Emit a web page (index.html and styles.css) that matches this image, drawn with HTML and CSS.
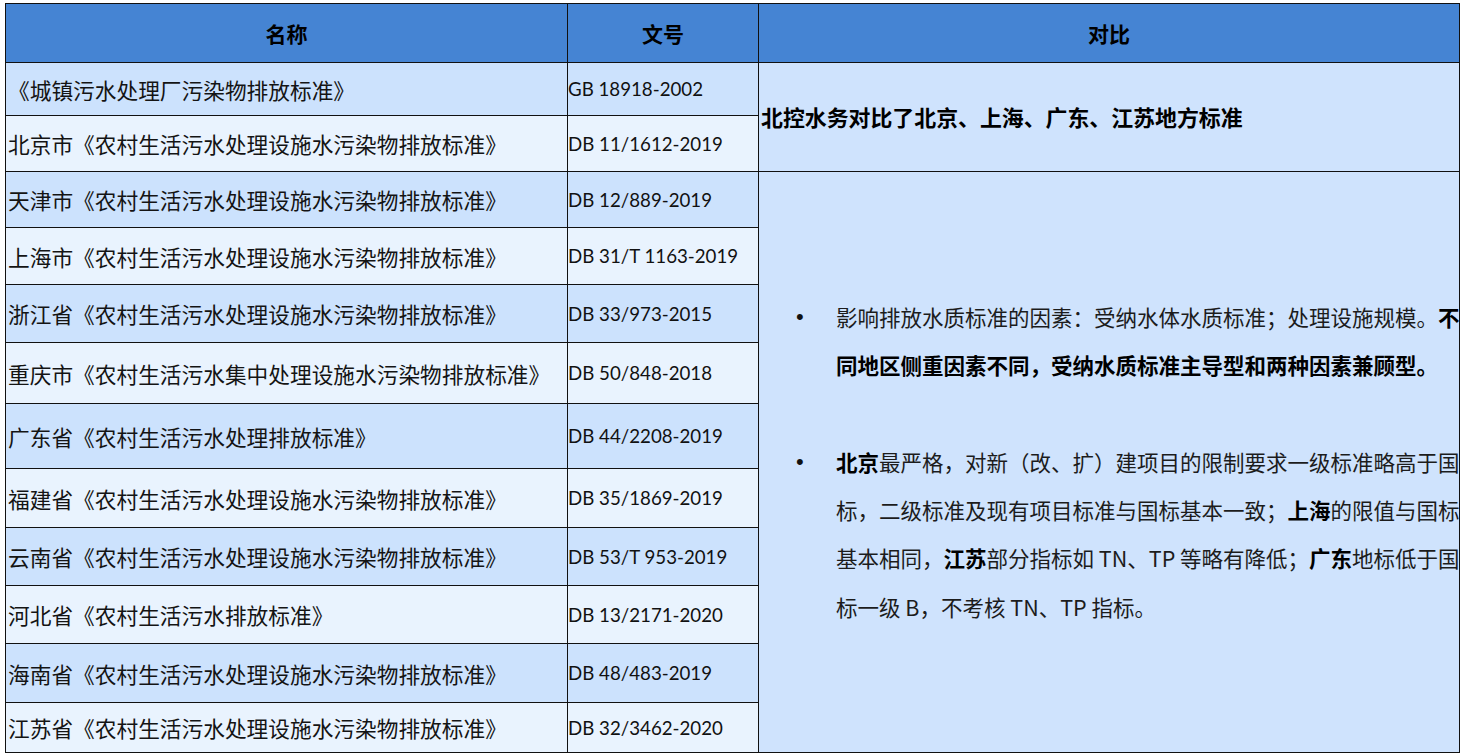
FILE: index.html
```html
<!DOCTYPE html>
<html lang="zh-CN">
<head>
<meta charset="utf-8">
<title>地方标准对比</title>
<link rel="stylesheet" href="styles.css">
</head>
<body>
<table class="std">
  <colgroup>
    <col class="c-name">
    <col class="c-code">
    <col class="c-cmp">
  </colgroup>
  <thead>
    <tr class="h">
      <th>名称</th>
      <th>文号</th>
      <th>对比</th>
    </tr>
  </thead>
  <tbody>
    <tr class="r dk h53">
      <td class="name">《城镇污水处理厂污染物排放标准》</td>
      <td class="code">GB 18918-2002</td>
      <td class="cmp summary" rowspan="2">北控水务对比了北京、上海、广东、江苏地方标准</td>
    </tr>
    <tr class="r lt h56">
      <td class="name">北京市《农村生活污水处理设施水污染物排放标准》</td>
      <td class="code">DB 11/1612-2019</td>
    </tr>
    <tr class="r dk h56">
      <td class="name">天津市《农村生活污水处理设施水污染物排放标准》</td>
      <td class="code">DB 12/889-2019</td>
      <td class="cmp detail" rowspan="11">
        <div class="item">
          <span class="dot">•</span>
          <p class="txt">影响排放水质标准的因素：受纳水体水质标准；处理设施规模。<b>不</b><br><b>同地区侧重因素不同，受纳水质标准主导型和两种因素兼顾型。</b></p>
        </div>
        <div class="gap"></div>
        <div class="item">
          <span class="dot">•</span>
          <p class="txt"><b>北京</b>最严格，对新（改、扩）建项目的限制要求一级标准略高于国<br>标，二级标准及现有项目标准与国标基本一致；<b>上海</b>的限值与国标<br>基本相同，<b>江苏</b>部分指标如 TN、TP 等略有降低；<b>广东</b>地标低于国<br>标一级 B，不考核 TN、TP 指标。</p>
        </div>
      </td>
    </tr>
    <tr class="r lt h57">
      <td class="name">上海市《农村生活污水处理设施水污染物排放标准》</td>
      <td class="code">DB 31/T 1163-2019</td>
    </tr>
    <tr class="r dk h58">
      <td class="name">浙江省《农村生活污水处理设施水污染物排放标准》</td>
      <td class="code">DB 33/973-2015</td>
    </tr>
    <tr class="r lt h61">
      <td class="name">重庆市《农村生活污水集中处理设施水污染物排放标准》</td>
      <td class="code">DB 50/848-2018</td>
    </tr>
    <tr class="r dk h65">
      <td class="name">广东省《农村生活污水处理排放标准》</td>
      <td class="code">DB 44/2208-2019</td>
    </tr>
    <tr class="r lt h59">
      <td class="name">福建省《农村生活污水处理设施水污染物排放标准》</td>
      <td class="code">DB 35/1869-2019</td>
    </tr>
    <tr class="r dk h58">
      <td class="name">云南省《农村生活污水处理设施水污染物排放标准》</td>
      <td class="code">DB 53/T 953-2019</td>
    </tr>
    <tr class="r lt h58">
      <td class="name">河北省《农村生活污水排放标准》</td>
      <td class="code">DB 13/2171-2020</td>
    </tr>
    <tr class="r dk h59">
      <td class="name">海南省《农村生活污水处理设施水污染物排放标准》</td>
      <td class="code">DB 48/483-2019</td>
    </tr>
    <tr class="r lt h50">
      <td class="name">江苏省《农村生活污水处理设施水污染物排放标准》</td>
      <td class="code">DB 32/3462-2020</td>
    </tr>
  </tbody>
</table>
</body>
</html>
```

FILE: styles.css
```css
html, body {
  margin: 0;
  padding: 0;
  background: #ffffff;
}

body {
  padding: 3px 0 0 5px;
  font-family: "Noto Sans CJK SC", "Noto Sans", sans-serif;
  color: #000;
}

.std {
  border-collapse: collapse;
  table-layout: fixed;
  width: 1454px;
}

.c-name { width: 562px; }
.c-code { width: 191px; }
.c-cmp  { width: 701px; }

.std th,
.std td {
  border: 1px solid #111;
  padding: 0;
  vertical-align: middle;
  overflow: hidden;
}

.h { height: 59px; }
.h th {
  background: #4584d3;
  font-size: 21px;
  font-weight: 700;
  text-align: center;
  line-height: 1;
  color: #000;
}

.h50 { height: 50px; }
.h53 { height: 53px; }
.h56 { height: 56px; }
.h57 { height: 57px; }
.h58 { height: 58px; }
.h59 { height: 59px; }
.h61 { height: 61px; }
.h65 { height: 65px; }

.dk td { background: #cce2fd; }
.lt td { background: #e9f3fe; }
.std td.cmp { background: #cfe3fd; }

.name {
  font-size: 21.7px;
  line-height: 1;
  padding: 1px 0 0 2px !important;
  white-space: nowrap;
  color: #141414;
}

.code {
  font-family: Lato, "Noto Sans", sans-serif;
  font-size: 18.7px;
  line-height: 1;
  padding: 1px 0 0 0 !important;
  white-space: nowrap;
  color: #111;
}

.summary {
  font-size: 21.9px;
  font-weight: 700;
  line-height: 1;
  padding: 0 0 0 2px !important;
  white-space: nowrap;
}

.detail {
  padding: 0 !important;
}

.item {
  display: flex;
  align-items: flex-start;
  padding-left: 37px;
}

.dot {
  width: 40px;
  flex: none;
  font-family: "Liberation Sans", sans-serif;
  font-size: 22px;
  line-height: 48.3px;
  color: #111;
}

.txt {
  margin: 0;
  font-size: 21.5px;
  line-height: 48.3px;
  white-space: nowrap;
  color: #1c1c1c;
}

.txt b {
  font-weight: 700;
  color: #000;
}

.gap { height: 48.3px; }
```
